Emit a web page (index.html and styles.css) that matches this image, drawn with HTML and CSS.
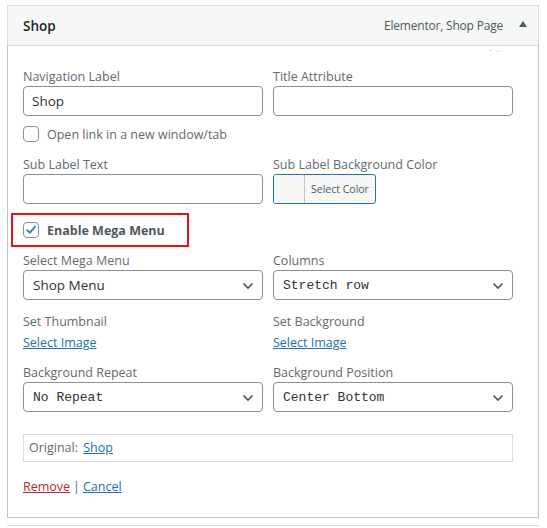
FILE: index.html
```html
<!DOCTYPE html>
<html lang="en">
<head>
<meta charset="utf-8">
<title>Menu item - Shop</title>
<link rel="stylesheet" href="styles.css">
</head>
<body>
<div class="menu-item">
  <div class="item-bar">
    <span class="item-title">Shop</span>
    <span class="item-controls">
      <span class="item-type">Elementor, Shop Page</span>
      <span class="arrow"></span>
    </span>
    <span class="ghost">- ..</span>
  </div>
  <div class="settings">
    <div class="row">
      <div class="field">
        <span class="lbl">Navigation Label</span>
        <div class="input">Shop</div>
      </div>
      <div class="field">
        <span class="lbl">Title Attribute</span>
        <div class="input"></div>
      </div>
    </div>

    <div class="check-row">
      <span class="cb"></span>
      <span>Open link in a new window/tab</span>
    </div>

    <div class="row row-sub">
      <div class="field">
        <span class="lbl">Sub Label Text</span>
        <div class="input"></div>
      </div>
      <div class="field">
        <span class="lbl">Sub Label Background Color</span>
        <div class="color-btn"><span class="swatch"></span><span class="color-text">Select Color</span></div>
      </div>
    </div>

    <div class="mega">
      <span class="cb checked">
        <svg width="16" height="16" viewBox="0 0 16 16"><path d="M3.6 8.2 L6.6 11.2 L12.6 4.2" fill="none" stroke="#3582c4" stroke-width="2.2" stroke-linecap="round" stroke-linejoin="round"/></svg>
      </span>
      <span class="mega-text">Enable Mega Menu</span>
    </div>

    <div class="row row-select">
      <div class="field">
        <span class="lbl">Select Mega Menu</span>
        <div class="select"><span>Shop Menu</span><svg class="chev" width="12" height="8" viewBox="0 0 12 8"><path d="M1.5 1.5 L6 6 L10.5 1.5" fill="none" stroke="#50575e" stroke-width="1.7"/></svg></div>
      </div>
      <div class="field">
        <span class="lbl">Columns</span>
        <div class="select mono"><span>Stretch row</span><svg class="chev" width="12" height="8" viewBox="0 0 12 8"><path d="M1.5 1.5 L6 6 L10.5 1.5" fill="none" stroke="#50575e" stroke-width="1.7"/></svg></div>
      </div>
    </div>

    <div class="row row-thumb">
      <div class="field">
        <span class="lbl">Set Thumbnail</span>
        <a class="link" href="#">Select Image</a>
      </div>
      <div class="field">
        <span class="lbl">Set Background</span>
        <a class="link" href="#">Select Image</a>
      </div>
    </div>

    <div class="row row-bg">
      <div class="field">
        <span class="lbl">Background Repeat</span>
        <div class="select mono"><span>No Repeat</span><svg class="chev" width="12" height="8" viewBox="0 0 12 8"><path d="M1.5 1.5 L6 6 L10.5 1.5" fill="none" stroke="#50575e" stroke-width="1.7"/></svg></div>
      </div>
      <div class="field">
        <span class="lbl">Background Position</span>
        <div class="select mono"><span>Center Bottom</span><svg class="chev" width="12" height="8" viewBox="0 0 12 8"><path d="M1.5 1.5 L6 6 L10.5 1.5" fill="none" stroke="#50575e" stroke-width="1.7"/></svg></div>
      </div>
    </div>

    <div class="original">Original: <a class="link orig-link" href="#">Shop</a></div>

    <div class="actions"><a class="link remove" href="#">Remove</a><span class="sep">|</span><a class="link" href="#">Cancel</a></div>
  </div>
  <div class="next-item"></div>
</div>
</body>
</html>
```

FILE: styles.css
```css
* { box-sizing: border-box; }

body {
  margin: 0;
  background: #fff;
  font-family: "Open Sans", "Noto Sans", sans-serif;
  font-size: 12.5px;
  color: #3c434a;
}

.menu-item {
  margin: 5px 0 0 7px;
  width: 532px;
}

.item-bar {
  position: relative;
  height: 41px;
  border: 1px solid #dcdcde;
  background: #f6f7f7;
  display: flex;
  align-items: center;
  justify-content: space-between;
  padding: 0 11px 0 15px;
}

.item-title {
  font-size: 13.5px;
  font-weight: 600;
  color: #1d2327;
}

.item-controls {
  display: flex;
  align-items: center;
}

.item-type {
  color: #50575e;
  font-size: 12px;
  letter-spacing: -0.2px;
  margin-right: 16px;
}

.arrow {
  width: 0;
  height: 0;
  border-left: 4.5px solid transparent;
  border-right: 4.5px solid transparent;
  border-bottom: 6px solid #50575e;
  margin-bottom: 3px;
}

.ghost {
  position: absolute;
  right: 36px;
  bottom: -8px;
  font-size: 8px;
  line-height: 8px;
  color: #a7aaad;
  letter-spacing: 1px;
}

.settings {
  border: 1px solid #c3c4c7;
  border-top: none;
  padding: 22px 25px 21px 15px;
}

.row {
  display: grid;
  grid-template-columns: 240px 240px;
  column-gap: 10px;
}

.field {
  display: flex;
  flex-direction: column;
  align-items: flex-start;
}

.lbl {
  display: block;
  line-height: 18px;
  height: 18px;
  color: #646970;
  white-space: nowrap;
}

.input {
  width: 240px;
  height: 30px;
  border: 1px solid #8c8f94;
  border-radius: 4px;
  padding: 0 8px;
  line-height: 28px;
  font-size: 13.5px;
  color: #2c3338;
}

.check-row {
  margin-top: 8px;
  height: 20px;
  display: flex;
  align-items: center;
  gap: 8px;
  color: #646970;
}

.cb {
  width: 16px;
  height: 16px;
  border: 1px solid #8c8f94;
  border-radius: 4px;
  background: #fff;
  display: flex;
  align-items: center;
  justify-content: center;
  flex: none;
}

.cb svg { display: block; }

.row-sub { margin-top: 12px; }

.color-btn {
  width: 103px;
  height: 30px;
  border: 1px solid #2271b1;
  border-radius: 3px;
  background: #f6f7f7;
  display: flex;
  overflow: hidden;
}

.swatch {
  width: 31px;
  border-right: 1px solid #c3c4c7;
  background: #f6f7f7;
}

.color-text {
  font-size: 10.5px;
  line-height: 28px;
  padding-left: 6px;
  color: #50575e;
}

.mega {
  margin: 9px 0 0 -12px;
  width: 178px;
  height: 34px;
  border: 2px solid #e3141b;
  padding-left: 10px;
  display: flex;
  align-items: center;
  gap: 8px;
}

.mega-text {
  font-weight: 700;
  color: #50575e;
  font-size: 12.5px;
}

.row-select { margin-top: 5px; }

.select {
  width: 240px;
  height: 30px;
  border: 1px solid #8c8f94;
  border-radius: 4px;
  padding: 0 8px 0 9px;
  display: flex;
  align-items: center;
  justify-content: space-between;
  font-size: 13.5px;
  color: #2c3338;
}

.select.mono {
  font-family: "Liberation Mono", "DejaVu Sans Mono", monospace;
  font-size: 13px;
}

.chev { display: block; margin-top: 1px; }

.row-thumb { margin-top: 13px; }

.row-thumb .link {
  margin-top: 3px;
  line-height: 18px;
}

.link {
  color: #2271b1;
  text-decoration: underline;
}

.row-bg { margin-top: 12px; }

.original {
  margin-top: 22px;
  height: 28px;
  border: 1px solid #dcdcde;
  padding: 0 5px;
  line-height: 26px;
  color: #646970;
}

.orig-link { margin-left: 2px; }

.actions {
  margin-top: 16px;
  line-height: 18px;
  color: #2271b1;
}

.remove { color: #b32d2e; }

.sep {
  color: #2271b1;
  margin: 0 3px;
}

.next-item {
  margin-top: 7px;
  height: 20px;
  border-top: 1px solid #dcdcde;
}
```
